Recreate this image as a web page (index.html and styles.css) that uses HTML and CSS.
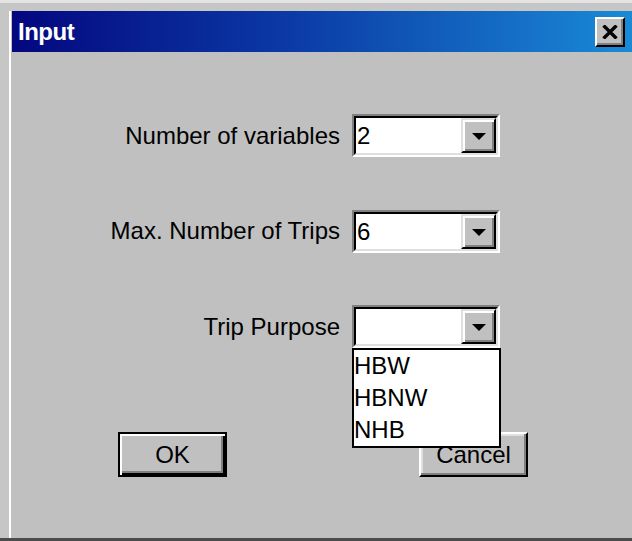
FILE: index.html
```html
<!DOCTYPE html>
<html lang="en">
<head>
<meta charset="utf-8">
<title>Input</title>
<link rel="stylesheet" href="styles.css">
</head>
<body>
<div class="window">
  <div class="frame">
    <div class="titlebar">
      <span class="title">Input</span>
      <button class="close" type="button" aria-label="Close">
        <svg width="16" height="14" viewBox="0 0 16 14" aria-hidden="true">
          <path d="M1.5 0.5 L14.5 13.5 M14.5 0.5 L1.5 13.5" stroke="#000" stroke-width="3.4" fill="none"/>
        </svg>
      </button>
    </div>

    <div class="content">
      <div class="form">
        <label class="label">Number of variables</label>
        <div class="combo">
          <div class="field">
            <span class="value">2</span>
            <span class="drop"><span class="arrow"></span></span>
          </div>
        </div>

        <label class="label">Max. Number of Trips</label>
        <div class="combo">
          <div class="field">
            <span class="value">6</span>
            <span class="drop"><span class="arrow"></span></span>
          </div>
        </div>

        <label class="label">Trip Purpose</label>
        <div class="combo combo-open">
          <div class="field">
            <span class="value"></span>
            <span class="drop"><span class="arrow"></span></span>
          </div>
          <ul class="listbox">
            <li>HBW</li>
            <li>HBNW</li>
            <li>NHB</li>
          </ul>
        </div>
      </div>

      <div class="actions">
        <button class="btn btn-default" type="button">OK</button>
        <button class="btn" type="button">Cancel</button>
      </div>
    </div>
  </div>
</div>
</body>
</html>
```

FILE: styles.css
```css
html, body {
  margin: 0;
  padding: 0;
  background: #c0c0c0;
}

body {
  width: 632px;
  height: 541px;
  overflow: hidden;
  font-family: "Liberation Sans", Arial, sans-serif;
  font-size: 24px;
  color: #000;
}

/* outer window frame */
.window {
  box-sizing: border-box;
  height: 541px;
  display: flex;
  flex-direction: column;
  background: #c6c6c6;
  border-top: 3px solid #e4e4e4;
  border-bottom: 3px solid #4c4c4c;
  padding: 8px 0 0 9px;
}

.frame {
  flex: 1;
  display: flex;
  flex-direction: column;
  background: #c0c0c0;
  border-left: 2px solid #fff;
  padding-left: 1px;
}

/* caption bar */
.titlebar {
  height: 41px;
  display: flex;
  align-items: center;
  justify-content: space-between;
  padding: 0 7px 0 6px;
  background: linear-gradient(to right, #04077f 0%, #0b3aa6 45%, #1a8ad6 100%);
}

.title {
  color: #fff;
  font-weight: bold;
  font-size: 24px;
  letter-spacing: -0.5px;
}

.close {
  box-sizing: border-box;
  width: 30px;
  height: 30px;
  padding: 0;
  margin-top: 1px;
  display: flex;
  align-items: center;
  justify-content: center;
  background: #c0c0c0;
  border: 2px solid;
  border-color: #fff #000 #000 #fff;
  box-shadow: inset -2px -2px #808080;
}

.close svg {
  display: block;
  margin: 0 1px 0 0;
}

/* dialog body */
.content {
  padding-top: 62px;
}

.form {
  display: grid;
  grid-template-columns: 328px 148px;
  grid-auto-rows: 43px;
  column-gap: 12px;
  row-gap: 52.5px;
  align-items: center;
}

.label {
  justify-self: end;
  white-space: nowrap;
}

/* drop-down combo */
.combo {
  position: relative;
  box-sizing: border-box;
  height: 43px;
  border: 2px solid;
  border-color: #808080 #fff #fff #808080;
}

.field {
  box-sizing: border-box;
  height: 100%;
  display: flex;
  background: #fff;
  border: 2px solid;
  border-color: #000 #dfdfdf #dfdfdf #000;
}

.value {
  flex: 1;
  padding-left: 1px;
  line-height: 35px;
}

.drop {
  box-sizing: border-box;
  width: 35px;
  display: flex;
  align-items: center;
  justify-content: center;
  background: #c0c0c0;
  border: 2px solid;
  border-color: #dfdfdf #000 #000 #dfdfdf;
  box-shadow: inset 2px 2px #fff, inset -2px -2px #808080;
}

.arrow {
  width: 0;
  height: 0;
  border-top: 7px solid #000;
  border-left: 7px solid transparent;
  border-right: 7px solid transparent;
  margin-top: 2px;
}

/* open list of the third combo, drawn over the buttons */
.listbox {
  position: absolute;
  top: calc(100% + 2px);
  left: -2px;
  box-sizing: border-box;
  width: 149px;
  height: 100px;
  margin: 0;
  padding: 0;
  list-style: none;
  background: #fff;
  border: 2px solid #000;
  overflow: hidden;
  z-index: 2;
}

.listbox li {
  line-height: 32px;
  padding-left: 0;
}

/* push buttons */
.actions {
  display: flex;
  gap: 192px;
  margin-top: 84px;
  padding-left: 106px;
}

.btn {
  box-sizing: border-box;
  width: 109px;
  height: 45px;
  padding: 0;
  font-family: "Liberation Sans", Arial, sans-serif;
  font-size: 24px;
  color: #000;
  background: #c0c0c0;
  border: 2px solid;
  border-color: #fff #000 #000 #fff;
  box-shadow: inset -2px -2px #808080, inset 2px 2px #dfdfdf;
}

.btn-default {
  border: 2px solid #000;
  box-shadow: inset 2px 2px #fff, inset -2px -2px #000, inset -4px -4px #808080;
}
```
